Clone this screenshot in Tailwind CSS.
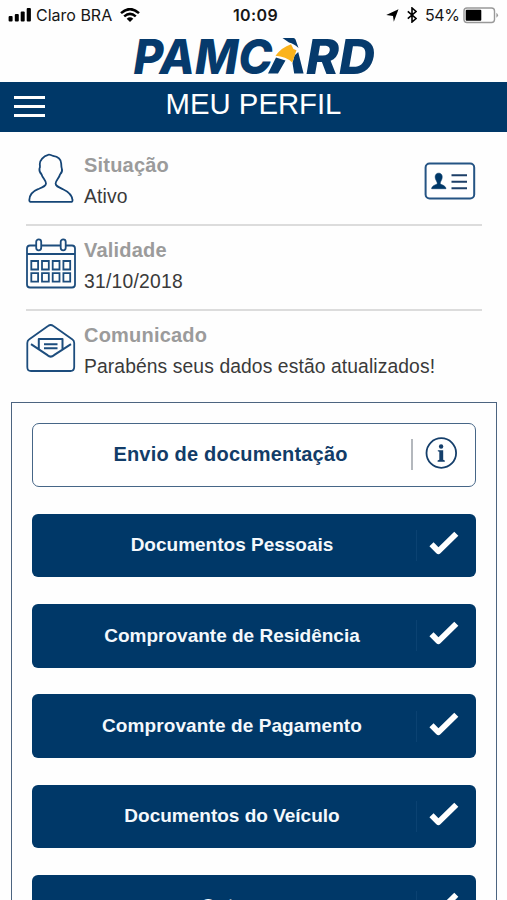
<!DOCTYPE html>
<html lang="pt-BR">
<head>
<meta charset="utf-8">
<title>Pamcard - Meu Perfil</title>
<script src="https://cdn.jsdelivr.net/npm/@tailwindcss/browser@4"></script>
</head>
<body class="w-[507px] h-[900px] overflow-hidden bg-[#fefefe] font-['Liberation_Sans',Arial,sans-serif]">
<svg class="hidden">
  <symbol id="check" viewBox="0 0 30 25"><path d="M2.5 13.3 9.4 20.3 27.3 2.8" fill="none" stroke="#fff" stroke-width="5.8" stroke-linejoin="round"/></symbol>
</svg>
<div class="flex h-full flex-col overflow-hidden">
  <header class="shrink-0">
    <div class="grid h-[30px] grid-cols-[1fr_auto_1fr] items-center px-2 font-['Inter','Liberation_Sans',sans-serif] text-[#161616]">
      <div class="flex items-center">
        <svg class="h-[14px] w-[24px]" viewBox="0 0 24 14" fill="#000"><rect x=".6" y="8" width="4" height="5.4" rx="1"/><rect x="6.8" y="6" width="4" height="7.4" rx="1"/><rect x="12.7" y="3.6" width="4" height="9.8" rx="1"/><rect x="18.7" y="0" width="4.2" height="13.4" rx="1"/></svg>
        <span class="ml-1 w-[77px] whitespace-nowrap text-[16px] leading-[30px] tracking-[0px]">Claro BRA</span>
        <svg class="ml-[7px] h-[14px] w-[20px]" viewBox="0 0 20 14" fill="none" stroke="#000" stroke-width="2.5"><path d="M1 5.2Q10-3 19 5.2M4.2 8.4Q10 3.4 15.8 8.4"/><path d="M6.7 10.7Q10 8 13.3 10.7L10 14Z" fill="#000" stroke="none"/></svg>
      </div>
      <span class="ml-[4px] text-[16px] font-semibold leading-[30px] tracking-[0.4px]">10:09</span>
      <div class="flex items-center justify-end">
        <svg class="h-[13px] w-[13px]" viewBox="0 0 13 13"><path d="M12.5.3 7.8 12.8 7 7 .2 6.1Z" fill="#000"/></svg>
        <svg class="ml-[8px] h-[16px] w-[10px]" viewBox="0 0 10 16" fill="none" stroke="#000" stroke-width="1.6"><path d="M.8 4.3 9 11.5 5 15V1L9 4.5.8 11.7"/></svg>
        <span class="ml-[8px] w-[34px] whitespace-nowrap text-[16px] tracking-[-0.4px]">54%</span>
        <svg class="ml-[4px] h-[17px] w-[36px]" viewBox="0 0 36 17"><rect x="1" y="1" width="30.5" height="14.5" rx="3" fill="#fff" stroke="#999" stroke-width="1.4"/><rect x="2.7" y="2.8" width="15.6" height="11" rx="1" fill="#000"/><path d="M33.4 5.7q3.2 2.4 0 5Z" fill="#999"/></svg>
      </div>
    </div>
    <div class="flex h-[52px] justify-center">
      <svg class="h-[52px] w-[507px]" viewBox="0 0 507 52">
        <g fill="#063a6c" font-family="Inter, Liberation Sans, sans-serif" font-weight="850" font-style="italic" font-size="48.5">
          <text x="133.5" y="43.5" textLength="139" lengthAdjust="spacingAndGlyphs">PAMC</text>
          <text x="306" y="43.5" textLength="69" lengthAdjust="spacingAndGlyphs">RD</text>
        </g>
        <path d="M268 43.5 276 27.5 285.5 30.5 278 43.5ZM294.2 43.5H303.6L298.2 22 294.5 25.5 292.5 33ZM282.5 8H293.5Q295 8 295.5 9.5L298.5 18Q294 13.5 289 12.5Z" fill="#063a6c"/>
        <path d="M275.5 25.8Q281.5 17.5 291 14.3L293.5 19 296.5 20.2 292.3 32.5Q286 26.5 275.5 25.8Z" fill="#fbb31c"/>
      </svg>
    </div>
    <div class="grid h-[50px] grid-cols-[60px_1fr_60px] bg-[#003868]">
      <div class="ml-[14px] mt-[14px] flex w-[31px] flex-col gap-[6px]"><i class="h-[3px] bg-white"></i><i class="h-[3px] bg-white"></i><i class="h-[3px] bg-white"></i></div>
      <h1 class="text-center text-[29.3px] leading-[43px] text-white">MEU PERFIL</h1>
    </div>
  </header>

  <section class="mx-[26px] mt-[8px] w-[456px] shrink-0">
    <div class="flex h-[86px] border-b-2 border-[#dcdcdc] pt-[13px]">
      <svg class="h-[52px] w-[50px]" viewBox="0 0 50 52" fill="none" stroke="#154576" stroke-width="1.8" stroke-linejoin="round"><path d="M22.2 1.8C17.2 3.2 13.8 7.4 13.8 11 13.8 13 14.5 14 13.5 15.5 13 18 14.6 20.5 15.6 21.5 16.5 25 20 27.5 20 30.5 20 33 17 34 12 36.2 7 38.2 3.6 41 3.3 47 3.2 48.5 4 48.9 5.5 48.9H44.5C46 48.9 46.8 48.4 46.5 47 46 41 42 38.5 37 36.2 32 34 29.6 33 29.6 30.5 29.6 27.5 33.3 25 34 21.5 35.4 20 36.6 17.5 35.8 15.5 35.2 14 35.4 12.5 35.2 10.5 35 6.5 32 3.4 27 2.8 24.8 2.6 23.8.8 22.2 1.8Z"/></svg>
      <div class="ml-2 flex-1">
        <h2 class="text-[20px] font-bold leading-[24px] tracking-[0.2px] text-[#9b9b9b]">Situação</h2>
        <p class="mt-[9px] text-[19.3px] leading-[22px] tracking-[0.15px] text-[#3a3a3a]">Ativo</p>
      </div>
      <svg class="mr-[6px] mt-[9px] h-[38px] w-[52px]" viewBox="0 0 52 38"><rect x="1.6" y="1.6" width="48.6" height="34.8" rx="4" fill="#fff" stroke="#255484" stroke-width="2"/><path d="M14.7 11.2C11.6 11.2 10.8 13.8 11.4 16.5 11.8 18.5 13.3 19.5 13.3 21.5 12.8 23.2 8.4 22.6 7.6 26.7H22C21.2 22.6 16.7 23.2 16.2 21.5 16.2 19.5 17.6 18.5 18 16.5 18.6 13.8 17.8 11.2 14.7 11.2Z" fill="#003868" stroke="#003868" stroke-width=".6"/><path d="M27.5 13.3H43M27.5 19.8H43M27.5 26.3H43" stroke="#1d3f68" stroke-width="1.9"/></svg>
    </div>
    <div class="flex h-[85px] border-b-2 border-[#dcdcdc] pt-[12px]">
      <svg class="h-[52px] w-[50px]" viewBox="0 0 50 52" fill="none" stroke="#1d4d7d" stroke-width="1.8"><path d="M10 7.5H4Q1 7.5 1 10.5V46.5Q1 49.5 4 49.5H46Q49 49.5 49 46.5V10.5Q49 7.5 46 7.5H40M15.5 7.5H34.5M1 16H49"/><rect x="10.2" y="1.3" width="5" height="11" rx="2.5"/><rect x="34.7" y="1.3" width="5" height="11" rx="2.5"/><path d="M5.3 23h6.8v8.5H5.3zM16 23h6.8v8.5H16zM26.7 23h6.8v8.5h-6.8zM37.4 23h6.8v8.5h-6.8zM5.3 35.2h6.8v8.5H5.3zM16 35.2h6.8v8.5H16zM26.7 35.2h6.8v8.5h-6.8zM37.4 35.2h6.8v8.5h-6.8z"/></svg>
      <div class="ml-2">
        <h2 class="text-[20px] font-bold leading-[24px] tracking-[0.2px] text-[#9b9b9b]">Validade</h2>
        <p class="mt-[9px] text-[19.3px] leading-[22px] tracking-[0.25px] text-[#3a3a3a]">31/10/2018</p>
      </div>
    </div>
    <div class="flex h-[82px] pt-[12px]">
      <svg class="h-[52px] w-[50px]" viewBox="0 0 50 52" fill="none" stroke="#1d4d7d" stroke-width="1.8" stroke-linejoin="round"><path d="M1.3 20Q1.3 17.5 3 16.4L22 3Q24.7 1 27.4 3L46.5 16.4Q48.2 17.5 48.2 20V44Q48.2 48 44.5 48H5Q1.3 48 1.3 44Z"/><path d="M5 21.2 21.5 32.2Q24.7 35 28 32.2L45 21.2M12.8 26.3V16H36.5V26.3" stroke-width="2"/><path d="M18 21.2H31.5M18 25.3H31.5" stroke-width="2"/></svg>
      <div class="ml-2">
        <h2 class="text-[20px] font-bold leading-[24px] tracking-[0.2px] text-[#9b9b9b]">Comunicado</h2>
        <p class="mt-[9px] whitespace-nowrap text-[19.3px] leading-[22px] tracking-[0.1px] text-[#3a3a3a]">Parabéns seus dados estão atualizados!</p>
      </div>
    </div>
  </section>

  <main class="ml-[11px] mt-[9px] flex min-h-0 w-[486px] flex-1 flex-col gap-[26.8px] overflow-hidden border-x-[1.5px] border-t-[1.5px] border-[#4c6480] px-5 pt-5 text-[19px] font-bold">
    <button class="flex h-[64px] w-[444px] shrink-0 items-center rounded-[7px] border-[1.5px] border-[#466687] bg-white text-[#123c68]">
      <span class="-mt-[2px] w-[378px] pl-[17px] text-center text-[20px] tracking-[0.2px]">Envio de documentação</span>
      <i class="-mt-[2px] h-[31px] w-[1.5px] bg-[#b4b8bd]"></i>
      <svg class="-mt-[5px] ml-[12px] h-[34px] w-[34px]" viewBox="0 0 34 34"><circle cx="16.3" cy="17" r="14.8" fill="none" stroke="#153f6b" stroke-width="1.8"/><circle cx="16.1" cy="10.5" r="2.2" fill="#153f6b"/><path d="M12.8 14.2H18.2V23.8L19.8 24.6V25.7H12.6V24.6L14.3 23.8V15.8L12.8 15.2Z" fill="#153f6b"/></svg>
    </button>
    <button class="flex h-[63.5px] w-[444px] shrink-0 items-center rounded-[6px] bg-[#003868] text-[#f4f8fc]"><span class="w-[384px] pl-[16px] text-center">Documentos Pessoais</span><i class="h-[31px] w-px bg-[#0b4272]"></i><svg class="-mt-1 ml-[12px] h-[25px] w-[30px]"><use href="#check"/></svg></button>
    <button class="flex h-[63.5px] w-[444px] shrink-0 items-center rounded-[6px] bg-[#003868] text-[#f4f8fc]"><span class="w-[384px] pl-[16px] text-center">Comprovante de Residência</span><i class="h-[31px] w-px bg-[#0b4272]"></i><svg class="-mt-1 ml-[12px] h-[25px] w-[30px]"><use href="#check"/></svg></button>
    <button class="flex h-[63.5px] w-[444px] shrink-0 items-center rounded-[6px] bg-[#003868] text-[#f4f8fc]"><span class="w-[384px] pl-[16px] text-center tracking-[0.1px]">Comprovante de Pagamento</span><i class="h-[31px] w-px bg-[#0b4272]"></i><svg class="-mt-1 ml-[12px] h-[25px] w-[30px]"><use href="#check"/></svg></button>
    <button class="flex h-[63.5px] w-[444px] shrink-0 items-center rounded-[6px] bg-[#003868] text-[#f4f8fc]"><span class="w-[384px] pl-[16px] text-center">Documentos do Veículo</span><i class="h-[31px] w-px bg-[#0b4272]"></i><svg class="-mt-1 ml-[12px] h-[25px] w-[30px]"><use href="#check"/></svg></button>
    <button class="flex h-[63.5px] w-[444px] shrink-0 items-center rounded-[6px] bg-[#003868] text-[#f4f8fc]"><span class="w-[384px] pl-[16px] text-center">Outros</span><i class="h-[31px] w-px bg-[#0b4272]"></i><svg class="-mt-1 ml-[12px] h-[25px] w-[30px]"><use href="#check"/></svg></button>
  </main>
</div>
</body>
</html>
